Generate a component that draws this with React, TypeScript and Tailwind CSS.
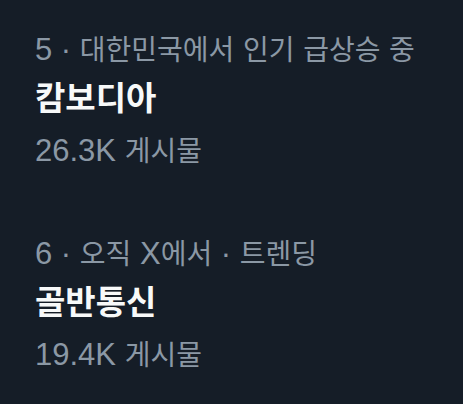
const trends = [
  { meta: '5 · 대한민국에서 인기 급상승 중', title: '캄보디아', count: '26.3K 게시물' },
  { meta: '6 · 오직 X에서 · 트렌딩', title: '골반통신', count: '19.4K 게시물' },
]

// Latin runs render a bit larger than the Hangul, as in the source font
function Mixed({ text }: { text: string }) {
  const parts = text.split(/([\uAC00-\uD7A3]+)/).filter(Boolean)
  return (
    <>
      {parts.map((p, i) =>
        /[\uAC00-\uD7A3]/.test(p) ? (
          <span key={i}>{p}</span>
        ) : (
          <span key={i} className="text-[31px]">{p}</span>
        )
      )}
    </>
  )
}

export default function App() {
  return (
    <div
      className="w-[463px] h-[404px] bg-[#151d27] overflow-hidden"
      style={{ fontFamily: '"Liberation Sans", "Noto Sans CJK KR", sans-serif' }}
    >
      <div className="flex flex-col gap-[66px] pt-[32px] px-[35px]">
        {trends.map((t) => (
          <div key={t.title} className="flex flex-col">
            <div className="text-[28px] leading-[36px] text-[#8b98a5] whitespace-nowrap">
              <Mixed text={t.meta} />
            </div>
            <div className="text-[33px] leading-[40px] font-bold text-[#f7f9f9] mt-[10px]">{t.title}</div>
            <div className="text-[28px] leading-[36px] text-[#8b98a5] mt-[14px] whitespace-nowrap">
              <Mixed text={t.count} />
            </div>
          </div>
        ))}
      </div>
    </div>
  )
}
